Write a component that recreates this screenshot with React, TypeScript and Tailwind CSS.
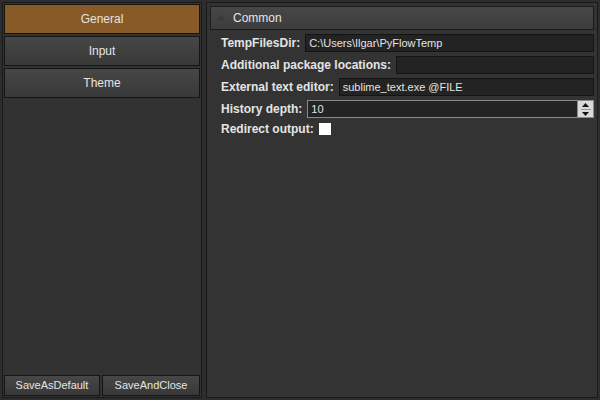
import React from "react"

const tabs = ["General", "Input", "Theme"]

function Field({ label, value }: { label: string; value: string }) {
  return (
    <div className="flex items-center h-[22px]">
      <span className="font-bold text-[12px] pr-[5px] whitespace-nowrap">{label}</span>
      <div className="flex-1 h-[18px] bg-[#232323] border border-[#141414] flex items-center px-[3px]">
        {value}
      </div>
    </div>
  )
}

export default function App() {
  return (
    <div
      className="w-[600px] h-[400px] bg-[#2d2d2d] flex p-[2px] gap-[4px] text-[11px] text-[#e4e4e4]"
      style={{ fontFamily: "Tahoma, 'Liberation Sans', sans-serif" }}
    >
      <div className="w-[200px] border border-[#1a1a1a] bg-[#323232] flex flex-col">
        <div className="flex flex-col gap-[2px] pt-[1px]">
          {tabs.map((t, i) => (
            <div
              key={t}
              className={`mx-[1px] h-[30px] border border-[#151515] flex items-center justify-center text-[12px] ${
                i === 0 ? "bg-[#875a28]" : "bg-gradient-to-b from-[#474747] to-[#383838]"
              }`}
            >
              {t}
            </div>
          ))}
        </div>
        <div className="flex-1" />
        <div className="flex gap-[2px] px-[1px] pb-[1px]">
          <div className="w-[96px] h-[21px] border border-[#151515] bg-gradient-to-b from-[#474747] to-[#383838] flex items-center justify-center">
            SaveAsDefault
          </div>
          <div className="flex-1 h-[21px] border border-[#151515] bg-gradient-to-b from-[#474747] to-[#383838] flex items-center justify-center">
            SaveAndClose
          </div>
        </div>
      </div>
      <div className="flex-1 border border-[#1a1a1a] bg-[#333333] p-[3px] flex flex-col">
        <div className="h-[24px] border border-[#1c1c1c] bg-gradient-to-b from-[#474747] to-[#3c3c3c] flex items-center pl-[5px]">
          <svg width="10" height="6" viewBox="0 0 10 6" className="mr-[7px]">
            <path d="M0 6 L5 0 L10 6 Z" fill="#3a3a3a" />
          </svg>
          <span className="text-[12px]">Common</span>
        </div>
        <div className="flex flex-col pl-[11px] pt-[2px]">
          <Field label="TempFilesDir:" value="C:\Users\Ilgar\PyFlowTemp" />
          <Field label="Additional package locations:" value="" />
          <Field label="External text editor:" value="sublime_text.exe @FILE" />
          <div className="flex items-center h-[22px]">
            <span className="font-bold text-[12px] pr-[5px]">History depth:</span>
            <div className="flex-1 h-[18px] bg-[#232323] border border-[#8a8a8a] flex items-center pl-[3px]">
              <span className="flex-1">10</span>
              <div className="w-[16px] h-[16px] bg-[#d9d9d9] border-l border-[#8a8a8a] flex flex-col items-center justify-center gap-[2px]">
                <svg width="7" height="4" viewBox="0 0 7 4"><path d="M0 4 L3.5 0 L7 4 Z" fill="#111" /></svg>
                <div className="w-[10px] h-[1px] bg-[#999]" />
                <svg width="7" height="4" viewBox="0 0 7 4"><path d="M0 0 L3.5 4 L7 0 Z" fill="#111" /></svg>
              </div>
            </div>
          </div>
          <div className="flex items-center h-[17px]">
            <span className="font-bold text-[12px] pr-[5px]">Redirect output:</span>
            <div className="w-[12px] h-[12px] bg-white" />
          </div>
        </div>
      </div>
    </div>
  )
}
